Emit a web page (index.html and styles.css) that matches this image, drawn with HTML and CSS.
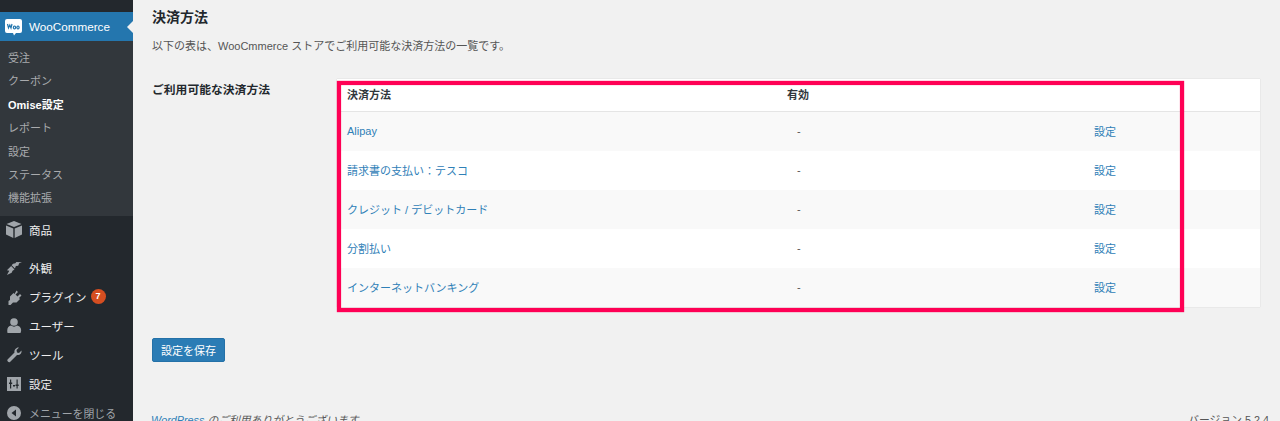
FILE: index.html
```html
<!DOCTYPE html>
<html lang="ja">
<head>
    <meta charset="UTF-8">
    <title>決済方法</title>
    <link rel="stylesheet" href="styles.css">
</head>
<body>
    <div class="page">
        <nav class="sidebar">
            <a class="menu-current" href="#">
                <svg class="woo-icon" width="17" height="18" viewBox="0 0 17 18">
                    <path fill="#fff" d="M2 1h13a2 2 0 0 1 2 2v10a2 2 0 0 1-2 2H11l-2 2.500L8 15H2a2 2 0 0 1-2-2V3a2 2 0 0 1 2-2z"/>
                    <path fill="none" stroke="#2476ae" stroke-width="1.200" d="M2.500 6l1 4 1.300-3 1.200 3 1-4M9.500 8a1.100 1.500 0 1 0 .01 0M13 8a1.100 1.500 0 1 0 .01 0"/>
                </svg>
                <span>WooCommerce</span>
            </a>
            <ul class="submenu">
                <li>受注</li>
                <li>クーポン</li>
                <li class="submenu-active">Omise設定</li>
                <li>レポート</li>
                <li>設定</li>
                <li>ステータス</li>
                <li>機能拡張</li>
            </ul>
            <ul class="mainmenu">
                <li class="menu-products">
                    <svg width="16" height="17" viewBox="0 0 16 17"><path d="M8 0l7.500 3L8 6 .5 3zM0 4.500l7.300 3V17L0 13.500zM16 4.500v9L8.700 17V7.500z"/></svg>
                    商品
                </li>
                <li class="menu-appearance">
                    <svg width="17" height="16" viewBox="0 0 17 16"><path d="M17 2l-3 1-1 2.500-2.500.5-1 2.500L6 5l1.500-1.500L10 3l1-1.500zM5.500 6l3.500 3.500-2 1.500-1 2-5 2.500L3.500 11 1 10.500z"/></svg>
                    外観
                </li>
                <li>
                    <svg width="16" height="16" viewBox="0 0 16 16"><path d="M10.500 1.500l1.500 1.500-2.500 2.500 2 2L14 5l1.500 1.500-2.500 2.500 1 1-3.500 3.500H7L4.500 16H2.500v-4l1.500-1V7.500L7.500 4l1 1z"/></svg>
                    プラグイン <span class="badge">7</span>
                </li>
                <li>
                    <svg width="15" height="15" viewBox="0 0 15 15"><circle cx="7.500" cy="4" r="3.800"/><path d="M1 15c-1-5 1-7 3.500-7.500 2 1.500 4 1.500 6 0C13 8 16 10 14 15z"/></svg>
                    ユーザー
                </li>
                <li>
                    <svg width="16" height="16" viewBox="0 0 16 16"><path d="M15.500 3.500c.5 2.500-1.500 5-4.500 4.500L4 15c-1 1-3.500-1-2.500-2.500L8.500 5.500C8 2.500 10.500 0 13 .5L10.500 3l.5 2.500 2 .5z"/></svg>
                    ツール
                </li>
                <li>
                    <svg width="14" height="14" viewBox="0 0 14 14"><path fill-rule="evenodd" d="M0 0h14v14H0zM3 2.500v3H2V7h1v4.500h1.200V7h1V5.500h-1v-3zM9.500 2.500v5h-1V9h1v2.500h1.200V9h1V7.500h-1v-5zM6 8h2v1.500H6z"/></svg>
                    設定
                </li>
                <li class="menu-collapse">
                    <svg width="14" height="14" viewBox="0 0 14 14"><path fill-rule="evenodd" d="M7 0a7 7 0 1 1 0 14A7 7 0 0 1 7 0zM9 3.500L4.500 7 9 10.500z"/></svg>
                    メニューを閉じる
                </li>
            </ul>
        </nav>

        <main class="content">
            <h2 class="section-title">決済方法</h2>
            <p class="section-desc">以下の表は、WooCmmerce ストアでご利用可能な決済方法の一覧です。</p>

            <div class="form-row">
                <div class="form-label">ご利用可能な決済方法</div>
                <div class="table-wrap">
                    <table class="gateways">
                        <thead>
                            <tr>
                                <th class="col-name">決済方法</th>
                                <th class="col-status">有効</th>
                                <th class="col-action"></th>
                            </tr>
                        </thead>
                        <tbody>
                            <tr>
                                <td><a href="#">Alipay</a></td>
                                <td class="dash">-</td>
                                <td><a href="#">設定</a></td>
                            </tr>
                            <tr>
                                <td><a href="#">請求書の支払い：テスコ</a></td>
                                <td class="dash">-</td>
                                <td><a href="#">設定</a></td>
                            </tr>
                            <tr>
                                <td><a href="#">クレジット / デビットカード</a></td>
                                <td class="dash">-</td>
                                <td><a href="#">設定</a></td>
                            </tr>
                            <tr>
                                <td><a href="#">分割払い</a></td>
                                <td class="dash">-</td>
                                <td><a href="#">設定</a></td>
                            </tr>
                            <tr>
                                <td><a href="#">インターネットバンキング</a></td>
                                <td class="dash">-</td>
                                <td><a href="#">設定</a></td>
                            </tr>
                        </tbody>
                    </table>
                    <div class="highlight"></div>
                </div>
            </div>

            <button class="save-button" type="button">設定を保存</button>

            <footer class="page-footer">
                <span><a href="#">WordPress</a> のご利用ありがとうございます。</span>
                <span class="version">バージョン 5.2.4</span>
            </footer>
        </main>
    </div>
</body>
</html>
```

FILE: styles.css
```css
/* page */
html, body {
    margin: 0;
    padding: 0;
    height: 421px;
    overflow: hidden;
}

body {
    font-family: "Liberation Sans", "Noto Sans CJK JP", sans-serif;
    font-size: 11px;
    color: #555;
    background-color: #f1f1f1;
}

a {
    color: #2f80b7;
    text-decoration: none;
}

.page {
    display: flex;
    height: 421px;
}

/* sidebar */
.sidebar {
    width: 133px;
    flex-shrink: 0;
    padding-top: 12px;
    background-color: #23282d;
    box-sizing: border-box;
}

.menu-current {
    position: relative;
    display: flex;
    align-items: center;
    gap: 7px;
    height: 29px;
    padding-left: 5px;
    font-size: 11.7px;
    color: #fff;
    background-color: #2476ae;
}

.menu-current::after {
    content: "";
    position: absolute;
    right: 0;
    top: 9px;
    border: 6px solid transparent;
    border-left-width: 0;
    border-right-color: #f1f1f1;
}

.submenu, .mainmenu {
    list-style: none;
    margin: 0;
    padding: 0;
}

.submenu {
    height: 175px;
    padding-top: 6px;
    box-sizing: border-box;
    background-color: #32373c;
}

.submenu li {
    height: 23.4px;
    line-height: 23px;
    padding-left: 8px;
    color: #a9abae;
}

.submenu .submenu-active {
    font-weight: bold;
    color: #fff;
}

.mainmenu {
    font-size: 11.5px;
    color: #eee;
}

.mainmenu li {
    display: flex;
    align-items: center;
    height: 29px;
    padding-left: 6px;
    white-space: nowrap;
}

.mainmenu svg {
    width: 16px;
    margin-right: 7px;
    fill: #a0a5aa;
}

.mainmenu .menu-products {
    margin-bottom: 9px;
    transform: translateY(-1px);
}

.mainmenu .menu-appearance {
    height: 28px;
}

.mainmenu .menu-collapse {
    font-size: 10.9px;
    color: #a0a5aa;
}

.badge {
    display: inline-block;
    width: 15px;
    height: 15px;
    margin-left: 4px;
    border-radius: 50%;
    font-size: 9px;
    font-weight: bold;
    line-height: 15px;
    text-align: center;
    color: #fff;
    background-color: #d54e21;
}

/* main column */
.content {
    flex: 1;
    padding: 0 11px 0 19px;
    min-width: 0;
}

.section-title {
    margin: 0;
    padding-top: 8px;
    font-size: 14px;
    line-height: 18px;
    color: #23282d;
}

.section-desc {
    margin: 0;
    padding-top: 12px;
    line-height: 17px;
}

.form-row {
    display: flex;
    margin: 24px 9px 0 0;
}

.form-label {
    width: 185px;
    flex-shrink: 0;
    padding-top: 3px;
    font-size: 11.8px;
    font-weight: bold;
    line-height: 17px;
    color: #23282d;
}

.table-wrap {
    position: relative;
    flex: 1;
}

.gateways {
    width: 100%;
    table-layout: fixed;
    border-collapse: collapse;
    background-color: #fff;
    box-shadow: 0 0 1px rgba(0, 0, 0, 0.2);
}

.gateways th {
    height: 32px;
    padding: 0 10px 2px;
    box-sizing: border-box;
    font-size: 11px;
    text-align: left;
    color: #32373c;
    border-bottom: 1px solid #e5e5e5;
}

.gateways td {
    height: 39px;
    padding: 0 10px;
}

.gateways tbody tr:nth-child(odd) {
    background-color: #f9f9f9;
}

.col-name {
    width: 440px;
}

.col-status {
    width: 307px;
}

.gateways .dash {
    padding-left: 20px;
}

/* red frame drawn over the screenshot */
.highlight {
    position: absolute;
    left: 0;
    top: 2px;
    width: 847px;
    height: 231px;
    border: 4px solid #ff0055;
    box-sizing: border-box;
    box-shadow: 0 0 1px #ff0055, inset 0 0 1px #ff0055;
}

.save-button {
    display: block;
    width: 73px;
    height: 24px;
    margin-top: 31px;
    padding: 0;
    font-family: inherit;
    font-size: 11px;
    color: #fff;
    background-color: #2b7cb5;
    border: 1px solid #2471a8;
    border-radius: 2px;
}

.page-footer {
    display: flex;
    justify-content: space-between;
    margin-top: 50px;
    font-size: 10.8px;
    line-height: 16px;
}

.page-footer a {
    font-style: italic;
}

.page-footer span:first-child {
    font-style: italic;
    margin-left: -1px;
}
```
